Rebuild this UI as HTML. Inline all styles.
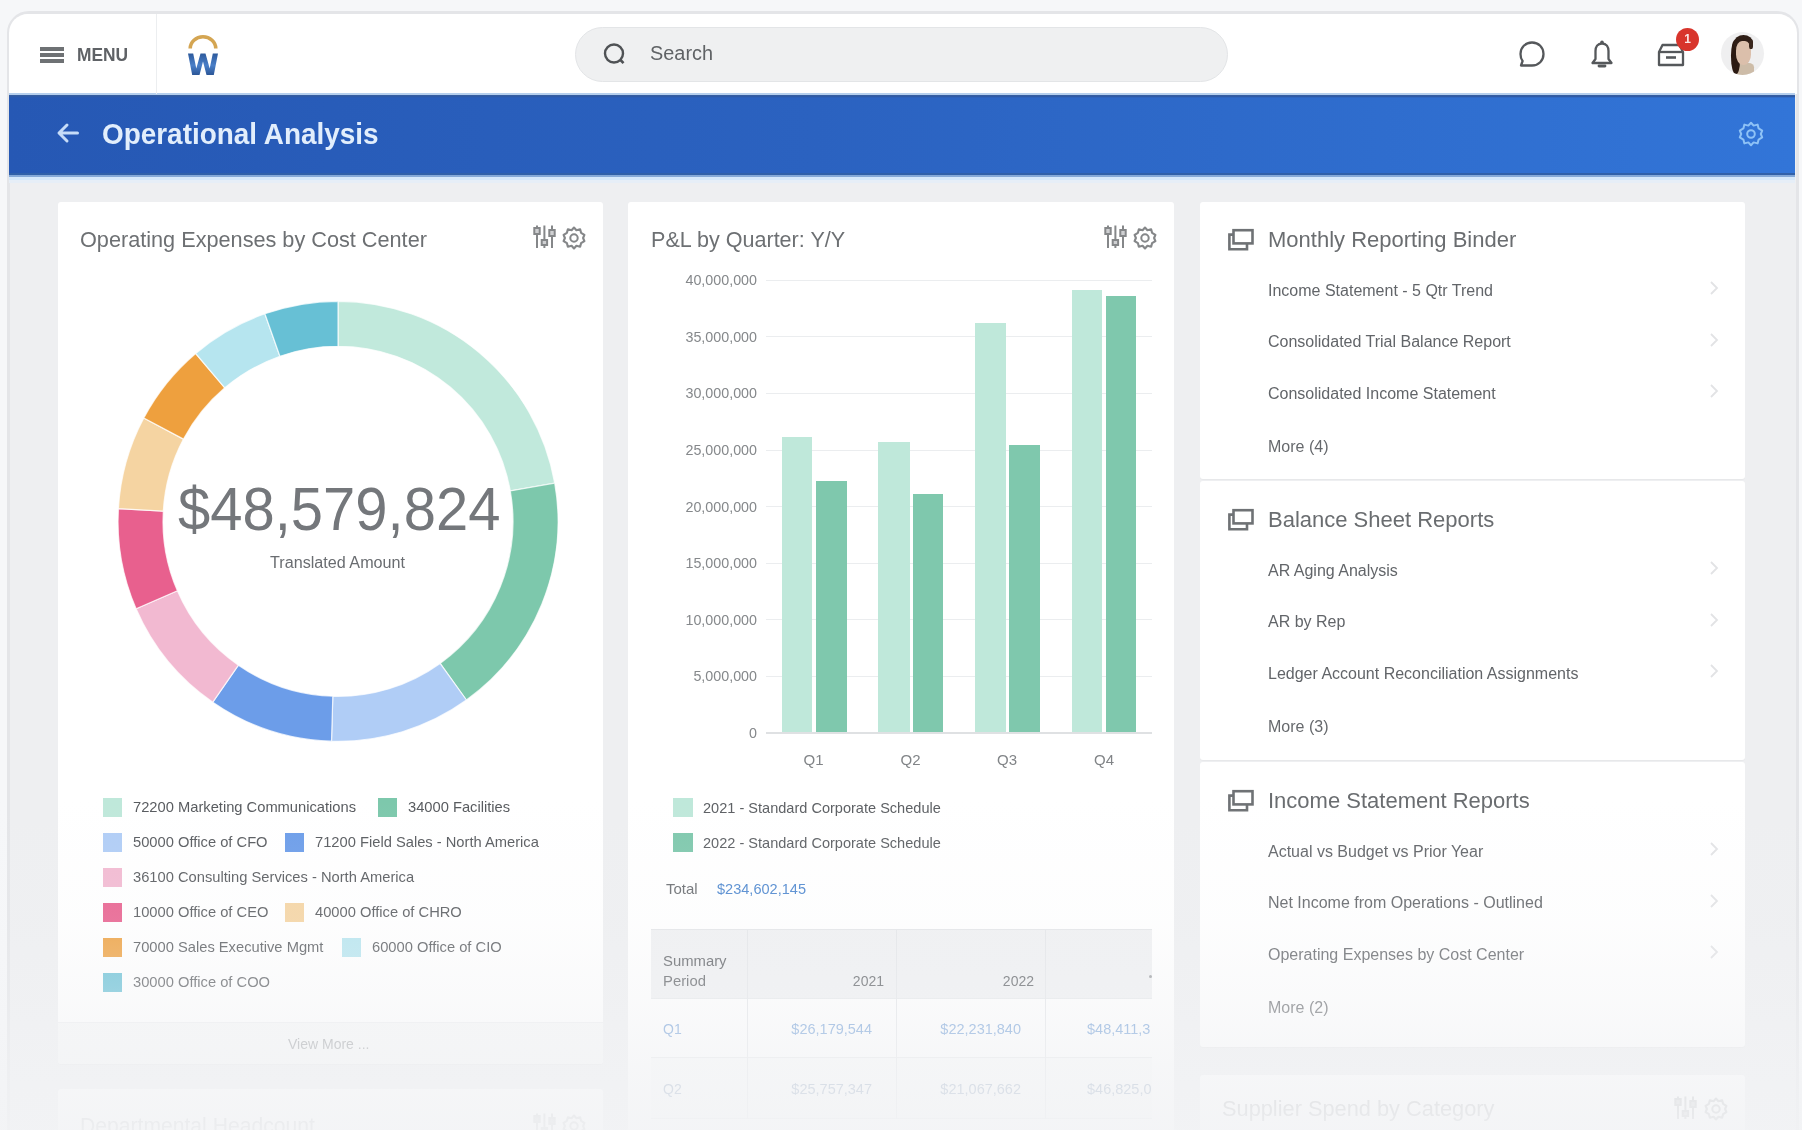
<!DOCTYPE html>
<html><head><meta charset="utf-8">
<style>
*{box-sizing:border-box;margin:0;padding:0}
html,body{width:1802px;height:1130px;overflow:hidden}
body{position:relative;background:#f6f7f9;font-family:"Liberation Sans",sans-serif;color:#555}
.abs{position:absolute}
.t{position:absolute;white-space:nowrap;line-height:1}
#frame{position:absolute;left:7px;top:11px;width:1792px;height:1200px;border:3px solid #e4e5e8;border-radius:22px;background:#eeeff1}
#header{position:absolute;left:9px;top:14px;width:1788px;height:80px;background:#fff;border-radius:19px 19px 0 0}
#band{position:absolute;left:9px;top:93px;width:1786px;height:82px;background:linear-gradient(180deg,#b5cfee 0,#b5cfee 1.6px,#3a629f 1.6px,#2f5aa6 3.5px,rgba(40,90,170,0) 5px),linear-gradient(90deg,#2658b4 0%,#2b62c0 45%,#3275d8 100%);border-bottom:2px solid #3060a9;box-shadow:0 2px 0 #85a9d8,0 5px 0 #d5e8fb,0 8px 0 #e6eef7}
.card{position:absolute;background:#fff;border-radius:3px;box-shadow:0 1px 1px rgba(0,0,0,.03)}
#fade{position:absolute;left:0;top:0;width:1802px;height:1130px;background:linear-gradient(180deg,rgba(244,245,247,0) 0px,rgba(242,243,245,0) 800px,rgba(242,243,245,.15) 920px,rgba(242,243,245,.4) 1000px,rgba(242,243,245,.7) 1070px,rgba(242,243,245,.88) 1130px)}
</style></head><body>
<div id="wrap" style="position:absolute;left:0;top:0;width:1802px;height:1130px;filter:blur(0.5px)">
<div id="frame"></div>
<div id="header"></div>
<div id="band"></div>

<div class="abs" style="left:40px;top:47px;width:24px;height:3.6px;background:#6e7174"></div>
<div class="abs" style="left:40px;top:53px;width:24px;height:3.6px;background:#6e7174"></div>
<div class="abs" style="left:40px;top:59px;width:24px;height:3.6px;background:#6e7174"></div>
<div class="t" style="left:77px;top:46px;font-size:18px;color:#5f6266;font-weight:700;transform:scaleX(0.965);transform-origin:0 0;">MENU</div>
<div class="abs" style="left:156px;top:14px;width:1px;height:80px;background:#eceef0"></div>
<svg class="abs" style="left:180px;top:25px" width="46" height="56" viewBox="180 25 46 56">
  <defs><linearGradient id="wg" x1="0" y1="0" x2="0" y2="1"><stop offset="0" stop-color="#2d5a9c"/><stop offset="0.55" stop-color="#4a7fc8"/><stop offset="1" stop-color="#2b5697"/></linearGradient></defs>
  <path d="M190.2,48.6 A12.8,11.8 0 0 1 215.8,48.6" fill="none" stroke="#d4a552" stroke-width="3.6"/>
  <path d="M188,53.5 L193.2,53.5 L196.3,68.5 L200.5,53.5 L205.5,53.5 L209.7,68.5 L212.8,53.5 L218,53.5 L213.8,75 L206.5,75 L203,61.5 L199.5,75 L192.2,75 Z" fill="url(#wg)"/>
</svg>
<div class="abs" style="left:575px;top:27px;width:653px;height:55px;border-radius:28px;background:#eff0f1;border:1px solid #e3e5e7"></div>
<svg class="abs" style="left:600px;top:40px" width="30" height="30" viewBox="0 0 30 30">
  <circle cx="14" cy="13.5" r="9" fill="none" stroke="#4f5255" stroke-width="2.4"/>
  <path d="M20.5,20 L23.5,23.2" stroke="#4f5255" stroke-width="2.6" stroke-linecap="butt"/>
</svg>
<div class="t" style="left:650px;top:44px;font-size:19.5px;color:#606366;font-weight:400;transform:scaleX(1.02);transform-origin:0 0;">Search</div>
<svg class="abs" style="left:1516px;top:38px" width="32" height="32" viewBox="0 0 32 32">
  <path d="M16,4.5 C22.6,4.5 27.5,9.4 27.5,16 C27.5,22.6 22.6,27.5 16,27.5 L5,27.5 L6.6,23 C5,21 4.5,18.5 4.5,16 C4.5,9.4 9.4,4.5 16,4.5 Z" fill="none" stroke="#55585b" stroke-width="2.3" stroke-linejoin="round"/>
</svg>
<svg class="abs" style="left:1588px;top:38px" width="28" height="32" viewBox="0 0 28 32">
  <path d="M14,5.5 C9.5,5.5 7.5,9 7.5,13 L7.5,21 L4.5,25 L23.5,25 L20.5,21 L20.5,13 C20.5,9 18.5,5.5 14,5.5 Z" fill="none" stroke="#55585b" stroke-width="2.3" stroke-linejoin="round"/>
  <circle cx="14" cy="4.2" r="1.8" fill="#55585b"/>
  <path d="M11,28 L17,28" stroke="#55585b" stroke-width="2.8" stroke-linecap="round"/>
</svg>
<svg class="abs" style="left:1655px;top:40px" width="32" height="30" viewBox="0 0 32 30">
  <path d="M4,12 L7.5,5 L24.5,5 L28,12 L28,25 L4,25 Z" fill="none" stroke="#55585b" stroke-width="2.3" stroke-linejoin="round"/>
  <path d="M4,12 L28,12" stroke="#55585b" stroke-width="2.3"/>
  <path d="M11,17.5 L21,17.5" stroke="#55585b" stroke-width="2.6"/>
</svg>
<div class="abs" style="left:1676px;top:28px;width:23px;height:23px;border-radius:50%;background:#d8352c;color:#fbe6e4;font-size:12px;font-weight:bold;text-align:center;line-height:23px">1</div>
<div class="abs" style="left:1721px;top:32px;width:43px;height:43px;border-radius:50%;background:#efeff0;overflow:hidden">
  <div class="abs" style="left:16px;top:31px;width:17px;height:14px;border-radius:30% 30% 0 0;background:#cdbca8"></div>
  <div class="abs" style="left:10px;top:8px;width:9px;height:34px;border-radius:45% 30% 40% 50%;background:#2b1a12"></div>
  <div class="abs" style="left:13px;top:3px;width:19px;height:15px;border-radius:50% 50% 30% 30%;background:#2f1e16"></div>
  <div class="abs" style="left:15px;top:9px;width:15px;height:24px;border-radius:40% 40% 45% 45%;background:#dbbfab"></div>
  <div class="abs" style="left:28px;top:8px;width:4px;height:9px;border-radius:40%;background:#3a271d"></div>
</div>
<svg class="abs" style="left:55px;top:120px" width="26" height="26" viewBox="0 0 26 26">
  <path d="M22.5,13 L4.5,13 M12,5 L4,13 L12,21" fill="none" stroke="#c6dcf8" stroke-width="3" stroke-linecap="round" stroke-linejoin="round"/>
</svg>
<div class="t" style="left:102px;top:120px;font-size:29px;color:#e2eefc;font-weight:700;transform:scaleX(0.962);transform-origin:0 0;">Operational Analysis</div>
<svg class="abs" style="left:1737px;top:120px" width="28" height="28" viewBox="0 0 28 28">
  <circle cx="14" cy="14" r="3.8" fill="none" stroke="#8ec2f6" stroke-width="2"/>
  <path d="M14,2.8 L16.6,5.6 L20.6,4.6 L21.6,8.4 L25.2,10.6 L23.8,14 L25.2,17.4 L21.6,19.6 L20.6,23.4 L16.6,22.4 L14,25.2 L11.4,22.4 L7.4,23.4 L6.4,19.6 L2.8,17.4 L4.2,14 L2.8,10.6 L6.4,8.4 L7.4,4.6 L11.4,5.6 Z" fill="none" stroke="#8ec2f6" stroke-width="2" stroke-linejoin="round"/>
</svg>
<div class="card" style="left:58px;top:202px;width:545px;height:862px"></div>
<div class="card" style="left:628px;top:202px;width:546px;height:960px"></div>
<div class="card" style="left:1200px;top:202px;width:545px;height:277px"></div>
<div class="card" style="left:1200px;top:481px;width:545px;height:279px"></div>
<div class="card" style="left:1200px;top:762px;width:545px;height:285px"></div>
<div class="card" style="left:58px;top:1089px;width:545px;height:100px"></div>
<div class="card" style="left:1200px;top:1075px;width:545px;height:100px"></div>
<div class="t" style="left:80px;top:229px;font-size:22px;color:#6d7073;font-weight:400;transform:scaleX(0.985);transform-origin:0 0;">Operating Expenses by Cost Center</div>
<svg class="abs" style="left:532px;top:225px" width="26" height="26" viewBox="0 0 26 26">
  <g stroke="#858789" stroke-width="2"><path d="M5,0.5 V23 M12.4,0.5 V23 M20,0.5 V23"/></g>
  <rect x="2.3" y="3" width="5.4" height="6" fill="#cfd0d2" stroke="#858789" stroke-width="2"/>
  <rect x="9.7" y="15" width="5.4" height="5" fill="#cfd0d2" stroke="#858789" stroke-width="2"/>
  <rect x="17.3" y="5" width="5.4" height="6" fill="#cfd0d2" stroke="#858789" stroke-width="2"/>
</svg>
<svg class="abs" style="left:561px;top:225px" width="26" height="26" viewBox="0 0 28 28">
  <circle cx="14" cy="14" r="4" fill="none" stroke="#858789" stroke-width="2.2"/>
  <path d="M14,2.8 L16.6,5.6 L20.6,4.6 L21.6,8.4 L25.2,10.6 L23.8,14 L25.2,17.4 L21.6,19.6 L20.6,23.4 L16.6,22.4 L14,25.2 L11.4,22.4 L7.4,23.4 L6.4,19.6 L2.8,17.4 L4.2,14 L2.8,10.6 L6.4,8.4 L7.4,4.6 L11.4,5.6 Z" fill="none" stroke="#858789" stroke-width="2.3" stroke-linejoin="round"/>
</svg>
<svg class="abs" style="left:0;top:0" width="700" height="800"><g stroke="rgba(255,255,255,.75)" stroke-width="1.2">
<path d="M338.0,301.3A220,220 0 0 1 554.7,483.1L510.3,490.9A175,175 0 0 0 338.0,346.3Z" fill="#c1e9dc"/>
<path d="M554.7,483.1A220,220 0 0 1 466.4,700.0L440.1,663.4A175,175 0 0 0 510.3,490.9Z" fill="#7dc8ac"/>
<path d="M466.4,700.0A220,220 0 0 1 331.5,741.2L332.8,696.2A175,175 0 0 0 440.1,663.4Z" fill="#b0cdf6"/>
<path d="M331.5,741.2A220,220 0 0 1 212.8,702.2L238.4,665.2A175,175 0 0 0 332.8,696.2Z" fill="#6c9de9"/>
<path d="M212.8,702.2A220,220 0 0 1 136.1,608.7L177.4,590.8A175,175 0 0 0 238.4,665.2Z" fill="#f2b9d1"/>
<path d="M136.1,608.7A220,220 0 0 1 118.4,508.6L163.3,511.2A175,175 0 0 0 177.4,590.8Z" fill="#e8608e"/>
<path d="M118.4,508.6A220,220 0 0 1 143.8,418.0L183.5,439.1A175,175 0 0 0 163.3,511.2Z" fill="#f5d4a2"/>
<path d="M143.8,418.0A220,220 0 0 1 195.7,353.5L224.8,387.8A175,175 0 0 0 183.5,439.1Z" fill="#eea03e"/>
<path d="M195.7,353.5A220,220 0 0 1 264.9,313.8L279.9,356.2A175,175 0 0 0 224.8,387.8Z" fill="#b6e5ef"/>
<path d="M264.9,313.8A220,220 0 0 1 338.0,301.3L338.0,346.3A175,175 0 0 0 279.9,356.2Z" fill="#67c0d5"/>
</g></svg>
<div class="t" style="left:178px;top:478px;font-size:62px;color:#74777b;font-weight:400;transform:scaleX(0.935);transform-origin:0 0;">$48,579,824</div>
<div class="t" style="left:270px;top:555px;font-size:16px;color:#6a6d71;font-weight:400;transform:scaleX(1.01);transform-origin:0 0;">Translated Amount</div>
<div class="abs" style="left:103px;top:798px;width:19px;height:19px;background:#bfe8da"></div>
<div class="t" style="left:133px;top:799px;font-size:15px;color:#585b5f;font-weight:400;transform:scaleX(0.98);transform-origin:0 0;">72200 Marketing Communications</div>
<div class="abs" style="left:378px;top:798px;width:19px;height:19px;background:#7dc8ac"></div>
<div class="t" style="left:408px;top:799px;font-size:15px;color:#585b5f;font-weight:400;transform:scaleX(0.98);transform-origin:0 0;">34000 Facilities</div>
<div class="abs" style="left:103px;top:833px;width:19px;height:19px;background:#b0cdf6"></div>
<div class="t" style="left:133px;top:834px;font-size:15px;color:#585b5f;font-weight:400;transform:scaleX(0.98);transform-origin:0 0;">50000 Office of CFO</div>
<div class="abs" style="left:285px;top:833px;width:19px;height:19px;background:#6c9de9"></div>
<div class="t" style="left:315px;top:834px;font-size:15px;color:#585b5f;font-weight:400;transform:scaleX(0.98);transform-origin:0 0;">71200 Field Sales - North America</div>
<div class="abs" style="left:103px;top:868px;width:19px;height:19px;background:#f2b9d1"></div>
<div class="t" style="left:133px;top:869px;font-size:15px;color:#585b5f;font-weight:400;transform:scaleX(0.98);transform-origin:0 0;">36100 Consulting Services - North America</div>
<div class="abs" style="left:103px;top:903px;width:19px;height:19px;background:#e8608e"></div>
<div class="t" style="left:133px;top:904px;font-size:15px;color:#585b5f;font-weight:400;transform:scaleX(0.98);transform-origin:0 0;">10000 Office of CEO</div>
<div class="abs" style="left:285px;top:903px;width:19px;height:19px;background:#f5d4a2"></div>
<div class="t" style="left:315px;top:904px;font-size:15px;color:#585b5f;font-weight:400;transform:scaleX(0.98);transform-origin:0 0;">40000 Office of CHRO</div>
<div class="abs" style="left:103px;top:938px;width:19px;height:19px;background:#eea03e"></div>
<div class="t" style="left:133px;top:939px;font-size:15px;color:#585b5f;font-weight:400;transform:scaleX(0.98);transform-origin:0 0;">70000 Sales Executive Mgmt</div>
<div class="abs" style="left:342px;top:938px;width:19px;height:19px;background:#b6e5ef"></div>
<div class="t" style="left:372px;top:939px;font-size:15px;color:#585b5f;font-weight:400;transform:scaleX(0.98);transform-origin:0 0;">60000 Office of CIO</div>
<div class="abs" style="left:103px;top:973px;width:19px;height:19px;background:#67c0d5"></div>
<div class="t" style="left:133px;top:974px;font-size:15px;color:#585b5f;font-weight:400;transform:scaleX(0.98);transform-origin:0 0;">30000 Office of COO</div>
<div class="abs" style="left:58px;top:1022px;width:545px;height:42px;background:#f7f8f8;border-top:1px solid #eeeff1;border-radius:0 0 3px 3px"></div>
<div class="t" style="left:288px;top:1037px;font-size:14px;color:#9a9da0;font-weight:400;">View More ...</div>
<div class="t" style="left:651px;top:229px;font-size:22px;color:#6d7073;font-weight:400;transform:scaleX(0.98);transform-origin:0 0;">P&amp;L by Quarter: Y/Y</div>
<svg class="abs" style="left:1103px;top:225px" width="26" height="26" viewBox="0 0 26 26">
  <g stroke="#858789" stroke-width="2"><path d="M5,0.5 V23 M12.4,0.5 V23 M20,0.5 V23"/></g>
  <rect x="2.3" y="3" width="5.4" height="6" fill="#cfd0d2" stroke="#858789" stroke-width="2"/>
  <rect x="9.7" y="15" width="5.4" height="5" fill="#cfd0d2" stroke="#858789" stroke-width="2"/>
  <rect x="17.3" y="5" width="5.4" height="6" fill="#cfd0d2" stroke="#858789" stroke-width="2"/>
</svg>
<svg class="abs" style="left:1132px;top:225px" width="26" height="26" viewBox="0 0 28 28">
  <circle cx="14" cy="14" r="4" fill="none" stroke="#858789" stroke-width="2.2"/>
  <path d="M14,2.8 L16.6,5.6 L20.6,4.6 L21.6,8.4 L25.2,10.6 L23.8,14 L25.2,17.4 L21.6,19.6 L20.6,23.4 L16.6,22.4 L14,25.2 L11.4,22.4 L7.4,23.4 L6.4,19.6 L2.8,17.4 L4.2,14 L2.8,10.6 L6.4,8.4 L7.4,4.6 L11.4,5.6 Z" fill="none" stroke="#858789" stroke-width="2.3" stroke-linejoin="round"/>
</svg>
<div class="t" style="left:600px;width:157px;text-align:right;top:273.3px;font-size:14.3px;color:#85888b">40,000,000</div>
<div class="abs" style="left:766px;top:279.8px;width:386px;height:1px;background:#ebedef"></div>
<div class="t" style="left:600px;width:157px;text-align:right;top:329.9px;font-size:14.3px;color:#85888b">35,000,000</div>
<div class="abs" style="left:766px;top:336.4px;width:386px;height:1px;background:#ebedef"></div>
<div class="t" style="left:600px;width:157px;text-align:right;top:386.4px;font-size:14.3px;color:#85888b">30,000,000</div>
<div class="abs" style="left:766px;top:392.9px;width:386px;height:1px;background:#ebedef"></div>
<div class="t" style="left:600px;width:157px;text-align:right;top:443.0px;font-size:14.3px;color:#85888b">25,000,000</div>
<div class="abs" style="left:766px;top:449.5px;width:386px;height:1px;background:#ebedef"></div>
<div class="t" style="left:600px;width:157px;text-align:right;top:499.5px;font-size:14.3px;color:#85888b">20,000,000</div>
<div class="abs" style="left:766px;top:506.0px;width:386px;height:1px;background:#ebedef"></div>
<div class="t" style="left:600px;width:157px;text-align:right;top:556.0px;font-size:14.3px;color:#85888b">15,000,000</div>
<div class="abs" style="left:766px;top:562.5px;width:386px;height:1px;background:#ebedef"></div>
<div class="t" style="left:600px;width:157px;text-align:right;top:612.6px;font-size:14.3px;color:#85888b">10,000,000</div>
<div class="abs" style="left:766px;top:619.1px;width:386px;height:1px;background:#ebedef"></div>
<div class="t" style="left:600px;width:157px;text-align:right;top:669.2px;font-size:14.3px;color:#85888b">5,000,000</div>
<div class="abs" style="left:766px;top:675.7px;width:386px;height:1px;background:#ebedef"></div>
<div class="t" style="left:600px;width:157px;text-align:right;top:725.7px;font-size:14.3px;color:#85888b">0</div>
<div class="abs" style="left:766px;top:731.5px;width:386px;height:2px;background:#dfe1e3"></div>
<div class="abs" style="left:782.0px;top:436.7px;width:30.0px;height:295.3px;background:#bfe8da"></div>
<div class="abs" style="left:816.0px;top:481.0px;width:30.5px;height:251.0px;background:#7fc8ad"></div>
<div class="abs" style="left:878.0px;top:441.5px;width:31.5px;height:290.5px;background:#bfe8da"></div>
<div class="abs" style="left:912.6px;top:494.0px;width:30.1px;height:238.0px;background:#7fc8ad"></div>
<div class="abs" style="left:975.0px;top:323.0px;width:31.0px;height:409.0px;background:#bfe8da"></div>
<div class="abs" style="left:1009.0px;top:444.7px;width:31.0px;height:287.3px;background:#7fc8ad"></div>
<div class="abs" style="left:1072.0px;top:289.6px;width:30.4px;height:442.4px;background:#bfe8da"></div>
<div class="abs" style="left:1106.0px;top:296.0px;width:30.0px;height:436.0px;background:#7fc8ad"></div>
<div class="t" style="left:783.5px;width:60px;text-align:center;top:752px;font-size:15px;color:#818487">Q1</div>
<div class="t" style="left:880.5px;width:60px;text-align:center;top:752px;font-size:15px;color:#818487">Q2</div>
<div class="t" style="left:977px;width:60px;text-align:center;top:752px;font-size:15px;color:#818487">Q3</div>
<div class="t" style="left:1074px;width:60px;text-align:center;top:752px;font-size:15px;color:#818487">Q4</div>
<div class="abs" style="left:673px;top:798px;width:20px;height:19px;background:#bfe8da"></div>
<div class="abs" style="left:673px;top:833px;width:20px;height:19px;background:#7fc8ad"></div>
<div class="t" style="left:703px;top:800px;font-size:15px;color:#5d6064;font-weight:400;transform:scaleX(0.97);transform-origin:0 0;">2021 - Standard Corporate Schedule</div>
<div class="t" style="left:703px;top:835px;font-size:15px;color:#5d6064;font-weight:400;transform:scaleX(0.97);transform-origin:0 0;">2022 - Standard Corporate Schedule</div>
<div class="t" style="left:666px;top:881px;font-size:15px;color:#6a6d71;font-weight:400;">Total</div>
<div class="t" style="left:717px;top:881px;font-size:15px;color:#4f88cf;font-weight:400;transform:scaleX(0.97);transform-origin:0 0;">$234,602,145</div>
<div class="abs" style="left:651px;top:929px;width:501px;height:69px;background:#eff0f2;border-top:1px solid #e3e5e8"></div>
<div class="abs" style="left:651px;top:998px;width:501px;height:60px;background:#fff;border-top:1px solid #e6e8ea;border-bottom:1px solid #e6e8ea"></div>
<div class="abs" style="left:651px;top:1058px;width:501px;height:61px;background:#fafbfb;border-bottom:1px solid #e6e8ea"></div>
<div class="abs" style="left:746.5px;top:929px;width:1px;height:190px;background:#e3e5e8"></div>
<div class="abs" style="left:896px;top:929px;width:1px;height:190px;background:#e3e5e8"></div>
<div class="abs" style="left:1044.5px;top:929px;width:1px;height:190px;background:#e3e5e8"></div>
<div class="t" style="left:663px;top:954px;font-size:14px;color:#5c5f63;font-weight:400;transform:scaleX(1.06);transform-origin:0 0;">Summary</div>
<div class="t" style="left:663px;top:974px;font-size:14px;color:#5c5f63;font-weight:400;transform:scaleX(1.06);transform-origin:0 0;">Period</div>
<div class="t" style="left:800px;width:84px;text-align:right;top:974px;font-size:14px;color:#5c5f63">2021</div>
<div class="t" style="left:950px;width:84px;text-align:right;top:974px;font-size:14px;color:#5c5f63">2022</div>
<div class="abs" style="left:1149px;top:975px;width:3px;height:3px;border-radius:50%;background:#9a9da0"></div>
<div class="t" style="left:663px;top:1022px;font-size:14px;color:#6d9cd6;font-weight:400;">Q1</div>
<div class="t" style="left:770px;width:102px;text-align:right;top:1022px;font-size:14.5px;color:#6d9cd6">$26,179,544</div>
<div class="t" style="left:919px;width:102px;text-align:right;top:1022px;font-size:14.5px;color:#6d9cd6">$22,231,840</div>
<div class="t" style="left:1087px;top:1022px;width:64px;overflow:hidden;font-size:14.5px;color:#6d9cd6">$48,411,384</div>
<div class="t" style="left:663px;top:1082px;font-size:14px;color:#93a6bf;font-weight:400;">Q2</div>
<div class="t" style="left:770px;width:102px;text-align:right;top:1082px;font-size:14.5px;color:#93a6bf">$25,757,347</div>
<div class="t" style="left:919px;width:102px;text-align:right;top:1082px;font-size:14.5px;color:#93a6bf">$21,067,662</div>
<div class="t" style="left:1087px;top:1082px;width:64px;overflow:hidden;font-size:14.5px;color:#93a6bf">$46,825,009</div>
<svg class="abs" style="left:1227px;top:228px" width="28" height="24" viewBox="0 0 28 24">
  <rect x="6.5" y="2.2" width="19" height="13.2" fill="none" stroke="#6f7275" stroke-width="2.6"/>
  <path d="M6.5,6.6 L2.4,6.6 L2.4,21.3 L20,21.3 L20,15.4" fill="none" stroke="#6f7275" stroke-width="2.6"/>
</svg>
<div class="t" style="left:1268px;top:229px;font-size:22px;color:#6a6d70;font-weight:400;">Monthly Reporting Binder</div>
<div class="t" style="left:1268px;top:282.5px;font-size:16px;color:#626569;font-weight:400;">Income Statement - 5 Qtr Trend</div>
<svg class="abs" style="left:1709px;top:280.0px" width="10" height="16" viewBox="0 0 10 16">
  <path d="M2,2 L8,8 L2,14" fill="none" stroke="#e2e3e5" stroke-width="1.8"/>
</svg>
<div class="t" style="left:1268px;top:334.2px;font-size:16px;color:#626569;font-weight:400;">Consolidated Trial Balance Report</div>
<svg class="abs" style="left:1709px;top:331.7px" width="10" height="16" viewBox="0 0 10 16">
  <path d="M2,2 L8,8 L2,14" fill="none" stroke="#e2e3e5" stroke-width="1.8"/>
</svg>
<div class="t" style="left:1268px;top:385.9px;font-size:16px;color:#626569;font-weight:400;">Consolidated Income Statement</div>
<svg class="abs" style="left:1709px;top:383.4px" width="10" height="16" viewBox="0 0 10 16">
  <path d="M2,2 L8,8 L2,14" fill="none" stroke="#e2e3e5" stroke-width="1.8"/>
</svg>
<div class="t" style="left:1268px;top:439px;font-size:16px;color:#66696d;font-weight:400;">More (4)</div>
<svg class="abs" style="left:1227px;top:508px" width="28" height="24" viewBox="0 0 28 24">
  <rect x="6.5" y="2.2" width="19" height="13.2" fill="none" stroke="#6f7275" stroke-width="2.6"/>
  <path d="M6.5,6.6 L2.4,6.6 L2.4,21.3 L20,21.3 L20,15.4" fill="none" stroke="#6f7275" stroke-width="2.6"/>
</svg>
<div class="t" style="left:1268px;top:509px;font-size:22px;color:#6a6d70;font-weight:400;">Balance Sheet Reports</div>
<div class="t" style="left:1268px;top:562.5px;font-size:16px;color:#626569;font-weight:400;">AR Aging Analysis</div>
<svg class="abs" style="left:1709px;top:560.0px" width="10" height="16" viewBox="0 0 10 16">
  <path d="M2,2 L8,8 L2,14" fill="none" stroke="#e2e3e5" stroke-width="1.8"/>
</svg>
<div class="t" style="left:1268px;top:614.2px;font-size:16px;color:#626569;font-weight:400;">AR by Rep</div>
<svg class="abs" style="left:1709px;top:611.7px" width="10" height="16" viewBox="0 0 10 16">
  <path d="M2,2 L8,8 L2,14" fill="none" stroke="#e2e3e5" stroke-width="1.8"/>
</svg>
<div class="t" style="left:1268px;top:665.9px;font-size:16px;color:#626569;font-weight:400;">Ledger Account Reconciliation Assignments</div>
<svg class="abs" style="left:1709px;top:663.4px" width="10" height="16" viewBox="0 0 10 16">
  <path d="M2,2 L8,8 L2,14" fill="none" stroke="#e2e3e5" stroke-width="1.8"/>
</svg>
<div class="t" style="left:1268px;top:719px;font-size:16px;color:#66696d;font-weight:400;">More (3)</div>
<svg class="abs" style="left:1227px;top:789px" width="28" height="24" viewBox="0 0 28 24">
  <rect x="6.5" y="2.2" width="19" height="13.2" fill="none" stroke="#6f7275" stroke-width="2.6"/>
  <path d="M6.5,6.6 L2.4,6.6 L2.4,21.3 L20,21.3 L20,15.4" fill="none" stroke="#6f7275" stroke-width="2.6"/>
</svg>
<div class="t" style="left:1268px;top:790px;font-size:22px;color:#6a6d70;font-weight:400;">Income Statement Reports</div>
<div class="t" style="left:1268px;top:843.5px;font-size:16px;color:#626569;font-weight:400;">Actual vs Budget vs Prior Year</div>
<svg class="abs" style="left:1709px;top:841.0px" width="10" height="16" viewBox="0 0 10 16">
  <path d="M2,2 L8,8 L2,14" fill="none" stroke="#e2e3e5" stroke-width="1.8"/>
</svg>
<div class="t" style="left:1268px;top:895.2px;font-size:16px;color:#626569;font-weight:400;">Net Income from Operations - Outlined</div>
<svg class="abs" style="left:1709px;top:892.7px" width="10" height="16" viewBox="0 0 10 16">
  <path d="M2,2 L8,8 L2,14" fill="none" stroke="#e2e3e5" stroke-width="1.8"/>
</svg>
<div class="t" style="left:1268px;top:946.9px;font-size:16px;color:#626569;font-weight:400;">Operating Expenses by Cost Center</div>
<svg class="abs" style="left:1709px;top:944.4px" width="10" height="16" viewBox="0 0 10 16">
  <path d="M2,2 L8,8 L2,14" fill="none" stroke="#e2e3e5" stroke-width="1.8"/>
</svg>
<div class="t" style="left:1268px;top:1000px;font-size:16px;color:#66696d;font-weight:400;">More (2)</div>
<div class="t" style="left:80px;top:1115px;font-size:22px;color:#c3c5c8;font-weight:400;transform:scaleX(0.96);transform-origin:0 0;">Departmental Headcount</div>
<svg class="abs" style="left:532px;top:1113px" width="26" height="26" viewBox="0 0 26 26">
  <g stroke="#c8cacc" stroke-width="2"><path d="M5,0.5 V23 M12.4,0.5 V23 M20,0.5 V23"/></g>
  <rect x="2.3" y="3" width="5.4" height="6" fill="#cfd0d2" stroke="#c8cacc" stroke-width="2"/>
  <rect x="9.7" y="15" width="5.4" height="5" fill="#cfd0d2" stroke="#c8cacc" stroke-width="2"/>
  <rect x="17.3" y="5" width="5.4" height="6" fill="#cfd0d2" stroke="#c8cacc" stroke-width="2"/>
</svg>
<svg class="abs" style="left:561px;top:1113px" width="26" height="26" viewBox="0 0 28 28">
  <circle cx="14" cy="14" r="4" fill="none" stroke="#c8cacc" stroke-width="2.2"/>
  <path d="M14,2.8 L16.6,5.6 L20.6,4.6 L21.6,8.4 L25.2,10.6 L23.8,14 L25.2,17.4 L21.6,19.6 L20.6,23.4 L16.6,22.4 L14,25.2 L11.4,22.4 L7.4,23.4 L6.4,19.6 L2.8,17.4 L4.2,14 L2.8,10.6 L6.4,8.4 L7.4,4.6 L11.4,5.6 Z" fill="none" stroke="#c8cacc" stroke-width="2.3" stroke-linejoin="round"/>
</svg>
<div class="t" style="left:1222px;top:1098px;font-size:22px;color:#b4b6b9;font-weight:400;transform:scaleX(0.99);transform-origin:0 0;">Supplier Spend by Category</div>
<svg class="abs" style="left:1673px;top:1096px" width="26" height="26" viewBox="0 0 26 26">
  <g stroke="#b9bbbd" stroke-width="2"><path d="M5,0.5 V23 M12.4,0.5 V23 M20,0.5 V23"/></g>
  <rect x="2.3" y="3" width="5.4" height="6" fill="#cfd0d2" stroke="#b9bbbd" stroke-width="2"/>
  <rect x="9.7" y="15" width="5.4" height="5" fill="#cfd0d2" stroke="#b9bbbd" stroke-width="2"/>
  <rect x="17.3" y="5" width="5.4" height="6" fill="#cfd0d2" stroke="#b9bbbd" stroke-width="2"/>
</svg>
<svg class="abs" style="left:1703px;top:1096px" width="26" height="26" viewBox="0 0 28 28">
  <circle cx="14" cy="14" r="4" fill="none" stroke="#b9bbbd" stroke-width="2.2"/>
  <path d="M14,2.8 L16.6,5.6 L20.6,4.6 L21.6,8.4 L25.2,10.6 L23.8,14 L25.2,17.4 L21.6,19.6 L20.6,23.4 L16.6,22.4 L14,25.2 L11.4,22.4 L7.4,23.4 L6.4,19.6 L2.8,17.4 L4.2,14 L2.8,10.6 L6.4,8.4 L7.4,4.6 L11.4,5.6 Z" fill="none" stroke="#b9bbbd" stroke-width="2.3" stroke-linejoin="round"/>
</svg>
</div>
<div id="fade"></div>
</body></html>
